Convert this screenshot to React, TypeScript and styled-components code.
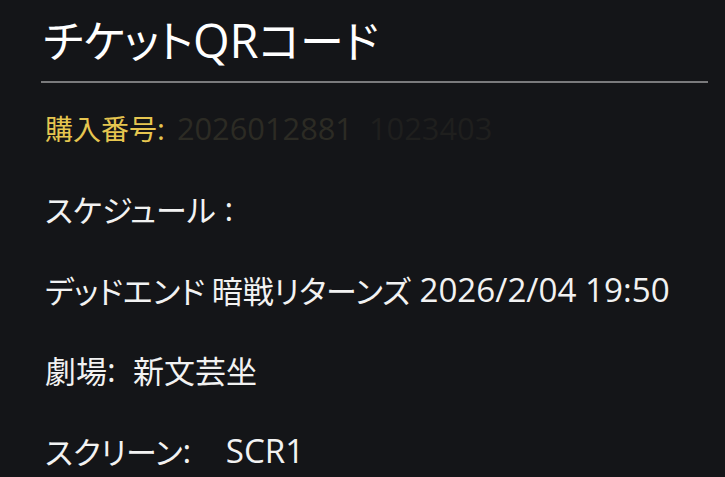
import React from 'react';
import styled, { createGlobalStyle } from 'styled-components';

const GlobalStyle = createGlobalStyle`
  html, body {
    margin: 0;
    padding: 0;
    background: #141518;
  }
  body {
    font-family: "Noto Sans CJK JP", "Open Sans", sans-serif;
    font-feature-settings: "palt";
    color: #f4f4f4;
  }
`;

function App() {
  return (
    <>
      <GlobalStyle />
      <Page>
        <Title>
          チケット<Latin>QR</Latin>コード
        </Title>
        <Divider />
        <List>
          <Line $size={28}>
            <Accent>
              購入番号<Latin>:</Latin>
            </Accent>
            <Faded>
              <Latin $scale={1.1}>2026012881</Latin>
            </Faded>
            <Fainter>
              <Latin $scale={1.1}>1023403</Latin>
            </Fainter>
          </Line>
          <Line>
            スケジュール<Latin> :</Latin>
          </Line>
          <Line>
            デッドエンド 暗戦リターンズ<Latin> 2026/2/04 19:50</Latin>
          </Line>
          <Line>
            劇場<Latin>:  </Latin>新文芸坐
          </Line>
          <Line>
            スクリーン<Latin>:    SCR1</Latin>
          </Line>
        </List>
      </Page>
    </>
  );
}

const Page = styled.div`
  width: 725px;
  height: 477px;
  box-sizing: border-box;
  padding: 12px 17px 0 41px;
  overflow: hidden;
`;

const Title = styled.h1`
  margin: 0 0 0 2px;
  font-size: 44px;
  font-weight: 400;
  line-height: 54px;
  color: #ffffff;
  white-space: pre;
`;

const Latin = styled.span<{ $scale?: number }>`
  font-family: "Open Sans", sans-serif;
  font-size: ${(p) => p.$scale ?? 1.07}em;
`;

const Divider = styled.hr`
  margin: 14px 0 0 0;
  border: none;
  height: 2px;
  background: #7a7a7c;
`;

const List = styled.div`
  display: flex;
  flex-direction: column;
  padding: 5px 0 0 4px;
`;

const Line = styled.div<{ $size?: number }>`
  height: 80.5px;
  display: flex;
  align-items: center;
  font-size: ${(p) => p.$size ?? 31}px;
  font-weight: 400;
  white-space: pre;
  color: #f2f2f2;
`;

const Accent = styled.span`
  color: #e6c650;
  margin-right: 12px;
`;

const Faded = styled.span`
  color: #2c2b24;
`;

const Fainter = styled.span`
  color: #1f1f1e;
  margin-left: 16px;
`;

export default App;
